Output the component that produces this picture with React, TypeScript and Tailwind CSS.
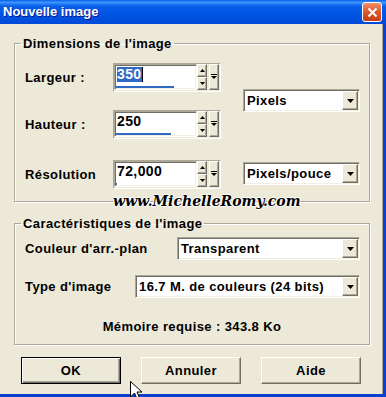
import React from "react";

const raised =
  "border border-t-white border-l-white border-b-[#716F64] border-r-[#716F64] bg-[#ECE9D8] shadow-[inset_-1px_-1px_0_#ACA899]";
const sunken =
  "border border-t-[#ACA899] border-l-[#ACA899] border-b-white border-r-white shadow-[inset_1px_1px_0_#716F64,inset_-1px_-1px_0_#F1EFE2]";

const Down = () => (
  <svg width="7" height="4" viewBox="0 0 7 4">
    <polygon points="0,0 7,0 3.5,4" fill="#000" />
  </svg>
);
const SmallDown = () => (
  <svg width="5" height="3" viewBox="0 0 5 3">
    <polygon points="0,0 5,0 2.5,3" fill="#000" />
  </svg>
);
const SmallUp = () => (
  <svg width="5" height="3" viewBox="0 0 5 3">
    <polygon points="0,3 5,3 2.5,0" fill="#000" />
  </svg>
);

type SpinProps = { value: string; selected?: boolean; bar: string };

const SpinField = ({ value, selected, bar }: SpinProps) => {
  return (
    <div className="flex border border-t-[#ACA899] border-l-[#ACA899] border-b-white border-r-white pr-[1px] pb-[1px]">
      <div className={`flex h-[26px] w-[83px] flex-col bg-white ${sunken}`}>
        <div className="flex items-center pl-[2px] pt-[2px] text-[14px] leading-[15px]">
          {selected ? (
            <>
              <span className="bg-[#316AC5] text-white">{value}</span>
              <span className="h-[15px] w-[1px] bg-black" />
            </>
          ) : (
            <span>{value}</span>
          )}
        </div>
        <div className={`mt-auto mb-[1px] ml-[1px] h-[2px] bg-[#316AC5] ${bar}`} />
      </div>
      <div className="flex w-[10px] flex-col">
        <div className={`flex h-[13px] items-center justify-center ${raised}`}>
          <SmallUp />
        </div>
        <div className={`flex h-[13px] items-center justify-center ${raised}`}>
          <SmallDown />
        </div>
      </div>
      <div className={`ml-[2px] flex h-[26px] w-[10px] items-center justify-center ${raised}`}>
        <svg width="6" height="6" viewBox="0 0 6 6">
          <rect x="0" y="0" width="6" height="1" fill="#000" />
          <polygon points="0,2 6,2 3,5" fill="#000" />
        </svg>
      </div>
    </div>
  );
};

const Dropdown = ({ text, width }: { text: string; width: string }) => {
  return (
    <div className={`flex h-[23px] items-stretch bg-white p-[1px] ${sunken} ${width}`}>
      <div className="flex flex-1 items-center pl-[2px]">{text}</div>
      <div className={`flex w-[16px] items-center justify-center ${raised}`}>
        <Down />
      </div>
    </div>
  );
};

const groupBox =
  "border border-[#ACA899] shadow-[inset_1px_1px_0_#fff,1px_1px_0_#fff] p-0 m-0 ml-[14px] w-[356px]";

export default function App() {
  return (
    <div className="relative flex h-[397px] w-[386px] flex-col overflow-hidden bg-[#ECE9D8] font-['Liberation_Sans',Arial,sans-serif] text-[13px] font-bold tracking-[0.4px] text-black">
      {/* title bar */}
      <div className="flex h-[24px] shrink-0 items-center justify-between bg-[linear-gradient(to_bottom,#0A5FE8_0%,#3D95FF_10%,#0A5FE8_25%,#0054E3_60%,#004AD9_100%)] pl-[3px] pr-[4px]">
        <span className="text-[13px] font-bold tracking-normal text-white [text-shadow:1px_1px_0_#0F1089]">
          Nouvelle image
        </span>
        <div className="flex h-[20px] w-[20px] items-center justify-center rounded-[3px] border border-white bg-[linear-gradient(to_bottom,#EE8F6C,#DC5A30_50%,#C63B12)]">
          <svg width="11" height="11" viewBox="0 0 11 11">
            <path d="M1.5 1.5 L9.5 9.5 M9.5 1.5 L1.5 9.5" stroke="#fff" strokeWidth="2" />
          </svg>
        </div>
      </div>

      {/* body */}
      <div className="flex flex-1 flex-col border-r-[3px] border-b-[3px] border-[#0B3FD0] pt-[12px] shadow-[inset_-1px_0_0_#ACA899]">
        <fieldset className={`${groupBox} h-[166px]`}>
          <legend className="ml-[6px] px-[2px] text-[13px] leading-[15px]">
            Dimensions de l'image
          </legend>
          <div className="flex pl-[10px]">
            <div className="flex flex-col">
              <div className="mt-[12px] flex items-center">
                <span className="w-[88px]">Largeur :</span>
                <SpinField value="350" selected bar="w-[58px]" />
              </div>
              <div className="mt-[18px] flex items-center">
                <span className="w-[88px]">Hauteur :</span>
                <SpinField value="250" bar="w-[55px]" />
              </div>
              <div className="mt-[21px] flex items-center">
                <span className="w-[88px]">Résolution</span>
                <SpinField value="72,000" bar="w-[1px]" />
              </div>
            </div>
            <div className="ml-[22px] flex flex-col">
              <div className="mt-[38px]">
                <Dropdown text="Pixels" width="w-[117px]" />
              </div>
              <div className="mt-[50px]">
                <Dropdown text="Pixels/pouce" width="w-[117px]" />
              </div>
            </div>
          </div>
        </fieldset>

        <fieldset className={`${groupBox} mt-[14px] h-[129px]`}>
          <legend className="ml-[6px] px-[2px] text-[13px] leading-[15px]">
            Caractéristiques de l'image
          </legend>
          <div className="flex flex-col pl-[10px]">
            <div className="mt-[6px] flex items-center">
              <span className="w-[152px]">Couleur d'arr.-plan</span>
              <Dropdown text="Transparent" width="w-[183px]" />
            </div>
            <div className="mt-[15px] flex items-center">
              <span className="w-[110px]">Type d'image</span>
              <Dropdown text="16.7 M. de couleurs (24 bits)" width="w-[225px]" />
            </div>
            <div className="mt-[21px] pr-[10px] text-center leading-[15px]">
              Mémoire requise : 343.8 Ko
            </div>
          </div>
        </fieldset>

        <div className="mt-[12px] flex gap-[20px] pl-[21px]">
          <div className="flex h-[27px] w-[100px] items-center justify-center border border-black bg-[#ECE9D8] shadow-[inset_1px_1px_0_#fff,inset_-1px_-1px_0_#716F64,inset_-2px_-2px_0_#ACA899]">
            OK
          </div>
          <div className={`flex h-[27px] w-[100px] items-center justify-center ${raised}`}>
            Annuler
          </div>
          <div className={`flex h-[27px] w-[100px] items-center justify-center ${raised}`}>
            Aide
          </div>
        </div>
      </div>

      {/* watermark */}
      <div className="absolute left-[113px] top-[192px] font-['DejaVu_Serif',serif] text-[14px] font-bold italic leading-[18px] tracking-normal text-black [text-shadow:1px_0_0_#fff,-1px_0_0_#fff,0_1px_0_#fff,0_-1px_0_#fff]">
        www.MichelleRomy.com
      </div>

      {/* mouse cursor */}
      <svg className="absolute left-[130px] top-[381px]" width="13" height="20" viewBox="0 0 13 20">
        <path d="M0.5 0.5 L0.5 16 L4.5 12 L7.5 19 L10 18 L7 11 L12 11 Z" fill="#fff" stroke="#000" strokeWidth="1" />
      </svg>
    </div>
  );
}
